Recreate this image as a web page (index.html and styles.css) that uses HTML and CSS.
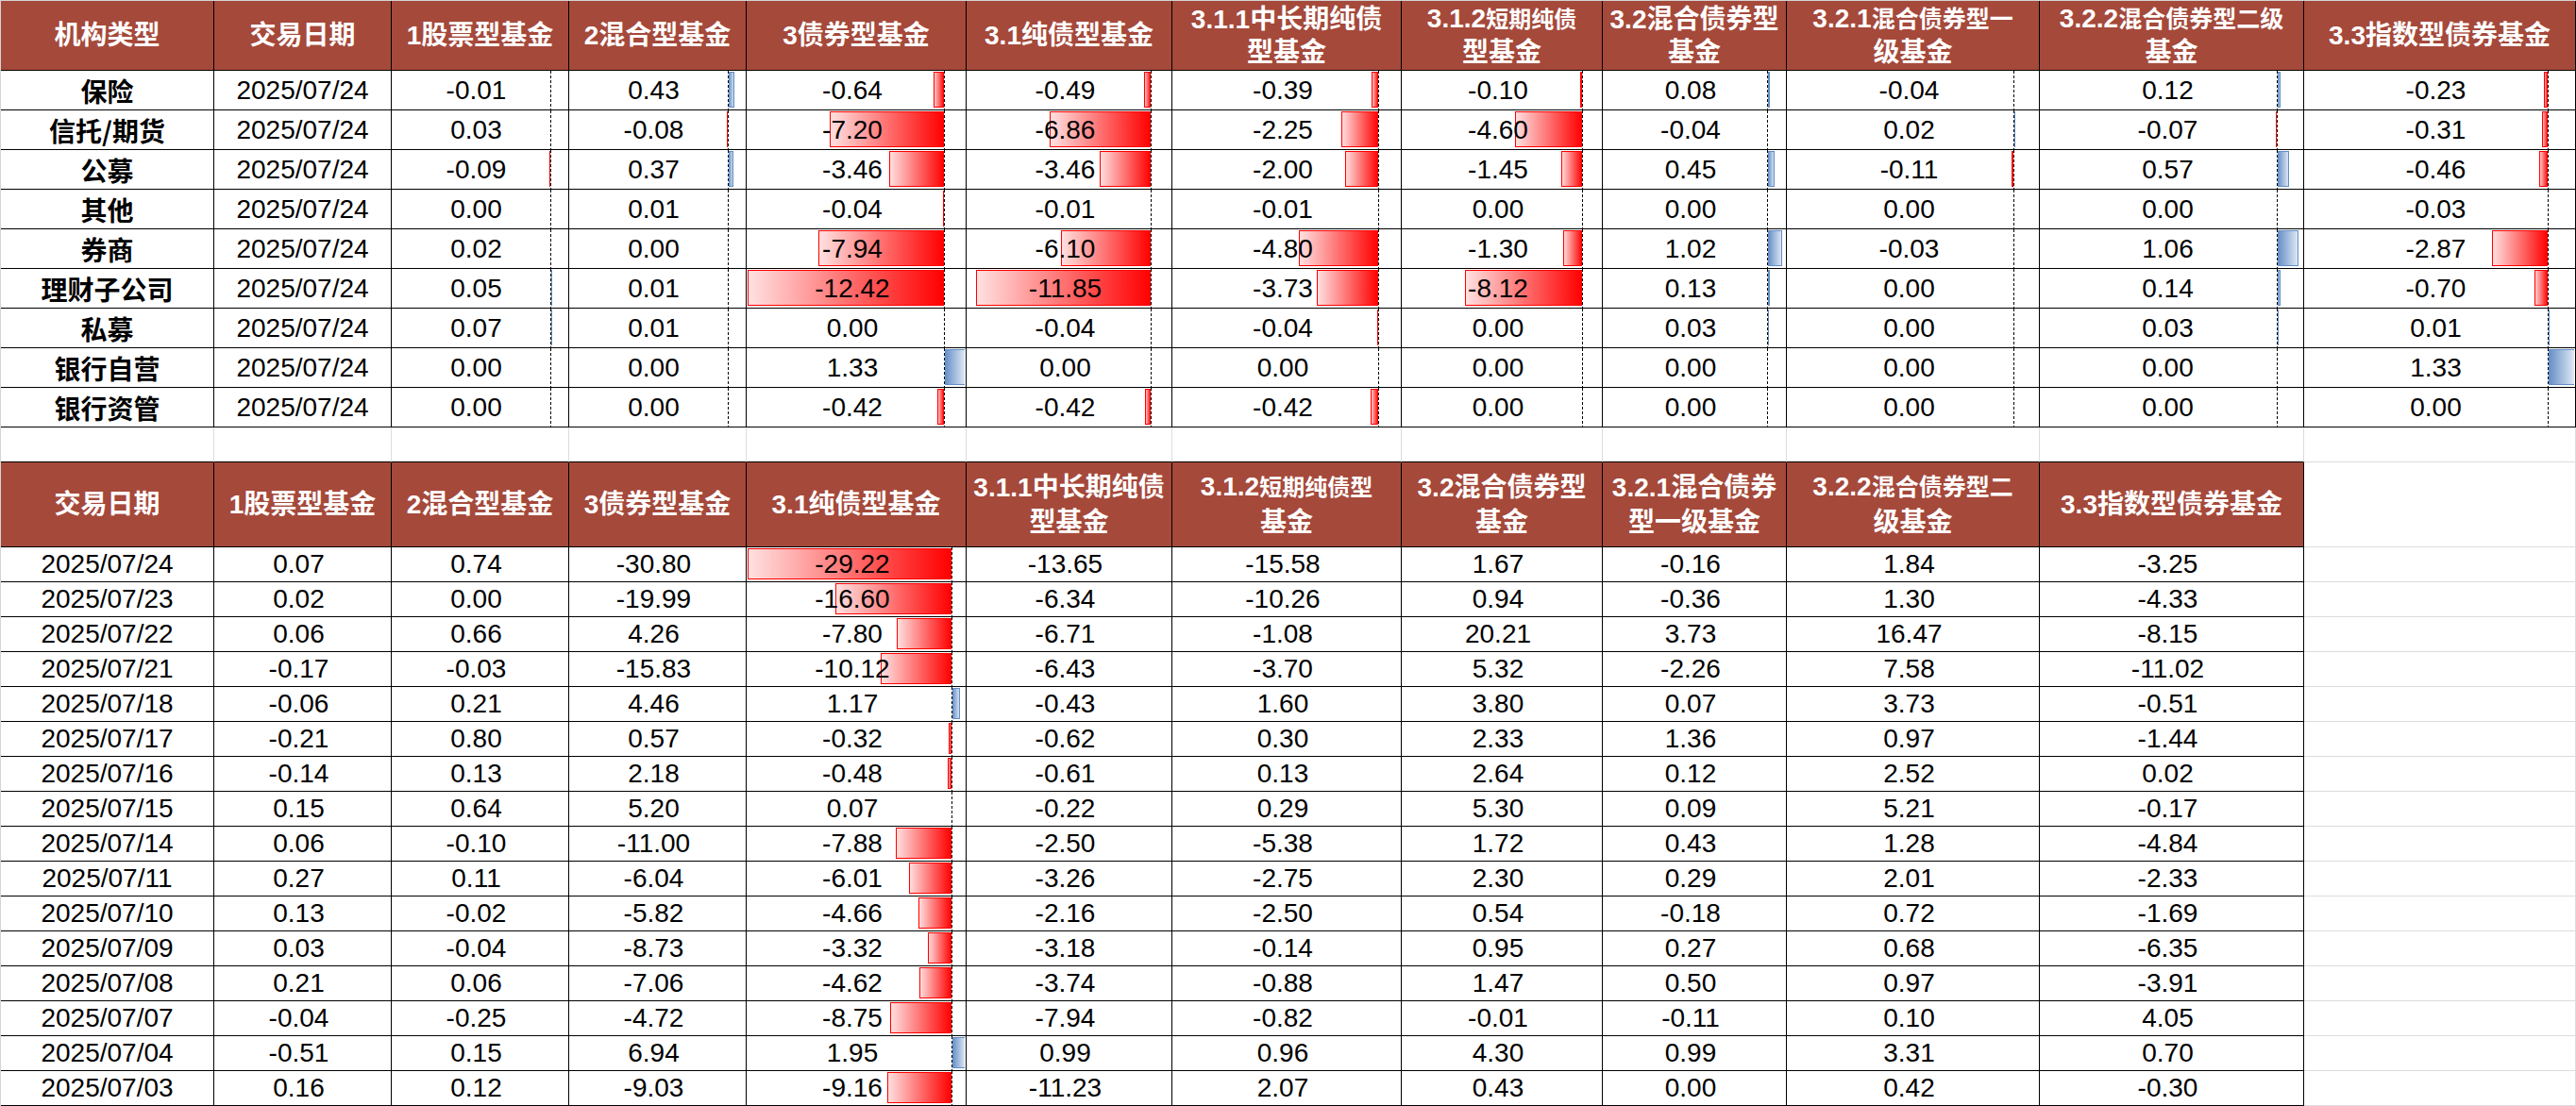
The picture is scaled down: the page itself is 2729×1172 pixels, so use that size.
FILE: index.html
```html
<!DOCTYPE html>
<html lang="zh-CN">
<head>
<meta charset="utf-8">
<title>机构类型净买入</title>
<link rel="stylesheet" href="styles.css">
</head>
<body>
<div class="sheet">
  <div class="grid t1">
    <div class="c h"><span>机构类型</span></div>
    <div class="c h"><span>交易日期</span></div>
    <div class="c h"><span>1股票型基金</span></div>
    <div class="c h"><span>2混合型基金</span></div>
    <div class="c h"><span>3债券型基金</span></div>
    <div class="c h"><span>3.1纯债型基金</span></div>
    <div class="c h"><span>3.1.1中长期纯债<br>型基金</span></div>
    <div class="c h"><span>3.1.2<span class="s24">短期纯债</span><br>型基金</span></div>
    <div class="c h"><span>3.2混合债券型<br>基金</span></div>
    <div class="c h"><span>3.2.1<span class="s25">混合债券型一</span><br>级基金</span></div>
    <div class="c h"><span>3.2.2<span class="s25">混合债券型二级</span><br>基金</span></div>
    <div class="c h"><span>3.3指数型债券基金</span></div>

    <div class="c l">保险</div><div class="c d">2025/07/24</div>
    <div class="c n"><span class="db"><i class="ng" style="--v:0.01"></i></span><span class="v">-0.01</span></div>
    <div class="c n"><span class="db"><i class="ps" style="--v:0.43"></i></span><span class="v">0.43</span></div>
    <div class="c n"><span class="db"><i class="ng" style="--v:0.64"></i></span><span class="v">-0.64</span></div>
    <div class="c n"><span class="db"><i class="ng" style="--v:0.49"></i></span><span class="v">-0.49</span></div>
    <div class="c n"><span class="db"><i class="ng" style="--v:0.39"></i></span><span class="v">-0.39</span></div>
    <div class="c n"><span class="db"><i class="ng" style="--v:0.10"></i></span><span class="v">-0.10</span></div>
    <div class="c n"><span class="db"><i class="ps" style="--v:0.08"></i></span><span class="v">0.08</span></div>
    <div class="c n"><span class="db"><i class="ng" style="--v:0.04"></i></span><span class="v">-0.04</span></div>
    <div class="c n"><span class="db"><i class="ps" style="--v:0.12"></i></span><span class="v">0.12</span></div>
    <div class="c n"><span class="db"><i class="ng" style="--v:0.23"></i></span><span class="v">-0.23</span></div>

    <div class="c l">信托/期货</div><div class="c d">2025/07/24</div>
    <div class="c n"><span class="db"><i class="ps" style="--v:0.03"></i></span><span class="v">0.03</span></div>
    <div class="c n"><span class="db"><i class="ng" style="--v:0.08"></i></span><span class="v">-0.08</span></div>
    <div class="c n"><span class="db"><i class="ng" style="--v:7.20"></i></span><span class="v">-7.20</span></div>
    <div class="c n"><span class="db"><i class="ng" style="--v:6.86"></i></span><span class="v">-6.86</span></div>
    <div class="c n"><span class="db"><i class="ng" style="--v:2.25"></i></span><span class="v">-2.25</span></div>
    <div class="c n"><span class="db"><i class="ng" style="--v:4.60"></i></span><span class="v">-4.60</span></div>
    <div class="c n"><span class="db"><i class="ng" style="--v:0.04"></i></span><span class="v">-0.04</span></div>
    <div class="c n"><span class="db"><i class="ps" style="--v:0.02"></i></span><span class="v">0.02</span></div>
    <div class="c n"><span class="db"><i class="ng" style="--v:0.07"></i></span><span class="v">-0.07</span></div>
    <div class="c n"><span class="db"><i class="ng" style="--v:0.31"></i></span><span class="v">-0.31</span></div>

    <div class="c l">公募</div><div class="c d">2025/07/24</div>
    <div class="c n"><span class="db"><i class="ng" style="--v:0.09"></i></span><span class="v">-0.09</span></div>
    <div class="c n"><span class="db"><i class="ps" style="--v:0.37"></i></span><span class="v">0.37</span></div>
    <div class="c n"><span class="db"><i class="ng" style="--v:3.46"></i></span><span class="v">-3.46</span></div>
    <div class="c n"><span class="db"><i class="ng" style="--v:3.46"></i></span><span class="v">-3.46</span></div>
    <div class="c n"><span class="db"><i class="ng" style="--v:2.00"></i></span><span class="v">-2.00</span></div>
    <div class="c n"><span class="db"><i class="ng" style="--v:1.45"></i></span><span class="v">-1.45</span></div>
    <div class="c n"><span class="db"><i class="ps" style="--v:0.45"></i></span><span class="v">0.45</span></div>
    <div class="c n"><span class="db"><i class="ng" style="--v:0.11"></i></span><span class="v">-0.11</span></div>
    <div class="c n"><span class="db"><i class="ps" style="--v:0.57"></i></span><span class="v">0.57</span></div>
    <div class="c n"><span class="db"><i class="ng" style="--v:0.46"></i></span><span class="v">-0.46</span></div>

    <div class="c l">其他</div><div class="c d">2025/07/24</div>
    <div class="c n"><span class="db"></span><span class="v">0.00</span></div>
    <div class="c n"><span class="db"><i class="ps" style="--v:0.01"></i></span><span class="v">0.01</span></div>
    <div class="c n"><span class="db"><i class="ng" style="--v:0.04"></i></span><span class="v">-0.04</span></div>
    <div class="c n"><span class="db"><i class="ng" style="--v:0.01"></i></span><span class="v">-0.01</span></div>
    <div class="c n"><span class="db"><i class="ng" style="--v:0.01"></i></span><span class="v">-0.01</span></div>
    <div class="c n"><span class="db"></span><span class="v">0.00</span></div>
    <div class="c n"><span class="db"></span><span class="v">0.00</span></div>
    <div class="c n"><span class="db"></span><span class="v">0.00</span></div>
    <div class="c n"><span class="db"></span><span class="v">0.00</span></div>
    <div class="c n"><span class="db"><i class="ng" style="--v:0.03"></i></span><span class="v">-0.03</span></div>

    <div class="c l">券商</div><div class="c d">2025/07/24</div>
    <div class="c n"><span class="db"><i class="ps" style="--v:0.02"></i></span><span class="v">0.02</span></div>
    <div class="c n"><span class="db"></span><span class="v">0.00</span></div>
    <div class="c n"><span class="db"><i class="ng" style="--v:7.94"></i></span><span class="v">-7.94</span></div>
    <div class="c n"><span class="db"><i class="ng" style="--v:6.10"></i></span><span class="v">-6.10</span></div>
    <div class="c n"><span class="db"><i class="ng" style="--v:4.80"></i></span><span class="v">-4.80</span></div>
    <div class="c n"><span class="db"><i class="ng" style="--v:1.30"></i></span><span class="v">-1.30</span></div>
    <div class="c n"><span class="db"><i class="ps" style="--v:1.02"></i></span><span class="v">1.02</span></div>
    <div class="c n"><span class="db"><i class="ng" style="--v:0.03"></i></span><span class="v">-0.03</span></div>
    <div class="c n"><span class="db"><i class="ps" style="--v:1.06"></i></span><span class="v">1.06</span></div>
    <div class="c n"><span class="db"><i class="ng" style="--v:2.87"></i></span><span class="v">-2.87</span></div>

    <div class="c l">理财子公司</div><div class="c d">2025/07/24</div>
    <div class="c n"><span class="db"><i class="ps" style="--v:0.05"></i></span><span class="v">0.05</span></div>
    <div class="c n"><span class="db"><i class="ps" style="--v:0.01"></i></span><span class="v">0.01</span></div>
    <div class="c n"><span class="db"><i class="ng" style="--v:12.42"></i></span><span class="v">-12.42</span></div>
    <div class="c n"><span class="db"><i class="ng" style="--v:11.85"></i></span><span class="v">-11.85</span></div>
    <div class="c n"><span class="db"><i class="ng" style="--v:3.73"></i></span><span class="v">-3.73</span></div>
    <div class="c n"><span class="db"><i class="ng" style="--v:8.12"></i></span><span class="v">-8.12</span></div>
    <div class="c n"><span class="db"><i class="ps" style="--v:0.13"></i></span><span class="v">0.13</span></div>
    <div class="c n"><span class="db"></span><span class="v">0.00</span></div>
    <div class="c n"><span class="db"><i class="ps" style="--v:0.14"></i></span><span class="v">0.14</span></div>
    <div class="c n"><span class="db"><i class="ng" style="--v:0.70"></i></span><span class="v">-0.70</span></div>

    <div class="c l">私募</div><div class="c d">2025/07/24</div>
    <div class="c n"><span class="db"><i class="ps" style="--v:0.07"></i></span><span class="v">0.07</span></div>
    <div class="c n"><span class="db"><i class="ps" style="--v:0.01"></i></span><span class="v">0.01</span></div>
    <div class="c n"><span class="db"></span><span class="v">0.00</span></div>
    <div class="c n"><span class="db"><i class="ng" style="--v:0.04"></i></span><span class="v">-0.04</span></div>
    <div class="c n"><span class="db"><i class="ng" style="--v:0.04"></i></span><span class="v">-0.04</span></div>
    <div class="c n"><span class="db"></span><span class="v">0.00</span></div>
    <div class="c n"><span class="db"><i class="ps" style="--v:0.03"></i></span><span class="v">0.03</span></div>
    <div class="c n"><span class="db"></span><span class="v">0.00</span></div>
    <div class="c n"><span class="db"><i class="ps" style="--v:0.03"></i></span><span class="v">0.03</span></div>
    <div class="c n"><span class="db"><i class="ps" style="--v:0.01"></i></span><span class="v">0.01</span></div>

    <div class="c l">银行自营</div><div class="c d">2025/07/24</div>
    <div class="c n"><span class="db"></span><span class="v">0.00</span></div>
    <div class="c n"><span class="db"></span><span class="v">0.00</span></div>
    <div class="c n"><span class="db"><i class="ps" style="--v:1.33"></i></span><span class="v">1.33</span></div>
    <div class="c n"><span class="db"></span><span class="v">0.00</span></div>
    <div class="c n"><span class="db"></span><span class="v">0.00</span></div>
    <div class="c n"><span class="db"></span><span class="v">0.00</span></div>
    <div class="c n"><span class="db"></span><span class="v">0.00</span></div>
    <div class="c n"><span class="db"></span><span class="v">0.00</span></div>
    <div class="c n"><span class="db"></span><span class="v">0.00</span></div>
    <div class="c n"><span class="db"><i class="ps" style="--v:1.33"></i></span><span class="v">1.33</span></div>

    <div class="c l">银行资管</div><div class="c d">2025/07/24</div>
    <div class="c n"><span class="db"></span><span class="v">0.00</span></div>
    <div class="c n"><span class="db"></span><span class="v">0.00</span></div>
    <div class="c n"><span class="db"><i class="ng" style="--v:0.42"></i></span><span class="v">-0.42</span></div>
    <div class="c n"><span class="db"><i class="ng" style="--v:0.42"></i></span><span class="v">-0.42</span></div>
    <div class="c n"><span class="db"><i class="ng" style="--v:0.42"></i></span><span class="v">-0.42</span></div>
    <div class="c n"><span class="db"></span><span class="v">0.00</span></div>
    <div class="c n"><span class="db"></span><span class="v">0.00</span></div>
    <div class="c n"><span class="db"></span><span class="v">0.00</span></div>
    <div class="c n"><span class="db"></span><span class="v">0.00</span></div>
    <div class="c n"><span class="db"></span><span class="v">0.00</span></div>
  </div>

  <div class="grid gap">
    <div class="g"></div><div class="g"></div><div class="g"></div><div class="g"></div>
    <div class="g"></div><div class="g"></div><div class="g"></div><div class="g"></div>
    <div class="g"></div><div class="g"></div><div class="g"></div><div class="g e"></div>
  </div>

  <div class="grid t2">
    <div class="c h"><span>交易日期</span></div>
    <div class="c h"><span>1股票型基金</span></div>
    <div class="c h"><span>2混合型基金</span></div>
    <div class="c h"><span>3债券型基金</span></div>
    <div class="c h"><span>3.1纯债型基金</span></div>
    <div class="c h"><span>3.1.1中长期纯债<br>型基金</span></div>
    <div class="c h"><span>3.1.2<span class="s24">短期纯债型</span><br>基金</span></div>
    <div class="c h"><span>3.2混合债券型<br>基金</span></div>
    <div class="c h"><span>3.2.1混合债券<br>型一级基金</span></div>
    <div class="c h"><span>3.2.2<span class="s25">混合债券型二</span><br>级基金</span></div>
    <div class="c h"><span>3.3指数型债券基金</span></div>
    <div class="x"></div>

    <div class="c d">2025/07/24</div><div class="c n">0.07</div><div class="c n">0.74</div><div class="c n">-30.80</div>
    <div class="c n"><span class="db"><i class="ng" style="--v:29.22"></i></span><span class="v">-29.22</span></div>
    <div class="c n">-13.65</div><div class="c n">-15.58</div><div class="c n">1.67</div><div class="c n">-0.16</div><div class="c n">1.84</div><div class="c n">-3.25</div><div class="x"></div>

    <div class="c d">2025/07/23</div><div class="c n">0.02</div><div class="c n">0.00</div><div class="c n">-19.99</div>
    <div class="c n"><span class="db"><i class="ng" style="--v:16.60"></i></span><span class="v">-16.60</span></div>
    <div class="c n">-6.34</div><div class="c n">-10.26</div><div class="c n">0.94</div><div class="c n">-0.36</div><div class="c n">1.30</div><div class="c n">-4.33</div><div class="x"></div>

    <div class="c d">2025/07/22</div><div class="c n">0.06</div><div class="c n">0.66</div><div class="c n">4.26</div>
    <div class="c n"><span class="db"><i class="ng" style="--v:7.80"></i></span><span class="v">-7.80</span></div>
    <div class="c n">-6.71</div><div class="c n">-1.08</div><div class="c n">20.21</div><div class="c n">3.73</div><div class="c n">16.47</div><div class="c n">-8.15</div><div class="x"></div>

    <div class="c d">2025/07/21</div><div class="c n">-0.17</div><div class="c n">-0.03</div><div class="c n">-15.83</div>
    <div class="c n"><span class="db"><i class="ng" style="--v:10.12"></i></span><span class="v">-10.12</span></div>
    <div class="c n">-6.43</div><div class="c n">-3.70</div><div class="c n">5.32</div><div class="c n">-2.26</div><div class="c n">7.58</div><div class="c n">-11.02</div><div class="x"></div>

    <div class="c d">2025/07/18</div><div class="c n">-0.06</div><div class="c n">0.21</div><div class="c n">4.46</div>
    <div class="c n"><span class="db"><i class="ps" style="--v:1.17"></i></span><span class="v">1.17</span></div>
    <div class="c n">-0.43</div><div class="c n">1.60</div><div class="c n">3.80</div><div class="c n">0.07</div><div class="c n">3.73</div><div class="c n">-0.51</div><div class="x"></div>

    <div class="c d">2025/07/17</div><div class="c n">-0.21</div><div class="c n">0.80</div><div class="c n">0.57</div>
    <div class="c n"><span class="db"><i class="ng" style="--v:0.32"></i></span><span class="v">-0.32</span></div>
    <div class="c n">-0.62</div><div class="c n">0.30</div><div class="c n">2.33</div><div class="c n">1.36</div><div class="c n">0.97</div><div class="c n">-1.44</div><div class="x"></div>

    <div class="c d">2025/07/16</div><div class="c n">-0.14</div><div class="c n">0.13</div><div class="c n">2.18</div>
    <div class="c n"><span class="db"><i class="ng" style="--v:0.48"></i></span><span class="v">-0.48</span></div>
    <div class="c n">-0.61</div><div class="c n">0.13</div><div class="c n">2.64</div><div class="c n">0.12</div><div class="c n">2.52</div><div class="c n">0.02</div><div class="x"></div>

    <div class="c d">2025/07/15</div><div class="c n">0.15</div><div class="c n">0.64</div><div class="c n">5.20</div>
    <div class="c n"><span class="db"><i class="ps" style="--v:0.07"></i></span><span class="v">0.07</span></div>
    <div class="c n">-0.22</div><div class="c n">0.29</div><div class="c n">5.30</div><div class="c n">0.09</div><div class="c n">5.21</div><div class="c n">-0.17</div><div class="x"></div>

    <div class="c d">2025/07/14</div><div class="c n">0.06</div><div class="c n">-0.10</div><div class="c n">-11.00</div>
    <div class="c n"><span class="db"><i class="ng" style="--v:7.88"></i></span><span class="v">-7.88</span></div>
    <div class="c n">-2.50</div><div class="c n">-5.38</div><div class="c n">1.72</div><div class="c n">0.43</div><div class="c n">1.28</div><div class="c n">-4.84</div><div class="x"></div>

    <div class="c d">2025/07/11</div><div class="c n">0.27</div><div class="c n">0.11</div><div class="c n">-6.04</div>
    <div class="c n"><span class="db"><i class="ng" style="--v:6.01"></i></span><span class="v">-6.01</span></div>
    <div class="c n">-3.26</div><div class="c n">-2.75</div><div class="c n">2.30</div><div class="c n">0.29</div><div class="c n">2.01</div><div class="c n">-2.33</div><div class="x"></div>

    <div class="c d">2025/07/10</div><div class="c n">0.13</div><div class="c n">-0.02</div><div class="c n">-5.82</div>
    <div class="c n"><span class="db"><i class="ng" style="--v:4.66"></i></span><span class="v">-4.66</span></div>
    <div class="c n">-2.16</div><div class="c n">-2.50</div><div class="c n">0.54</div><div class="c n">-0.18</div><div class="c n">0.72</div><div class="c n">-1.69</div><div class="x"></div>

    <div class="c d">2025/07/09</div><div class="c n">0.03</div><div class="c n">-0.04</div><div class="c n">-8.73</div>
    <div class="c n"><span class="db"><i class="ng" style="--v:3.32"></i></span><span class="v">-3.32</span></div>
    <div class="c n">-3.18</div><div class="c n">-0.14</div><div class="c n">0.95</div><div class="c n">0.27</div><div class="c n">0.68</div><div class="c n">-6.35</div><div class="x"></div>

    <div class="c d">2025/07/08</div><div class="c n">0.21</div><div class="c n">0.06</div><div class="c n">-7.06</div>
    <div class="c n"><span class="db"><i class="ng" style="--v:4.62"></i></span><span class="v">-4.62</span></div>
    <div class="c n">-3.74</div><div class="c n">-0.88</div><div class="c n">1.47</div><div class="c n">0.50</div><div class="c n">0.97</div><div class="c n">-3.91</div><div class="x"></div>

    <div class="c d">2025/07/07</div><div class="c n">-0.04</div><div class="c n">-0.25</div><div class="c n">-4.72</div>
    <div class="c n"><span class="db"><i class="ng" style="--v:8.75"></i></span><span class="v">-8.75</span></div>
    <div class="c n">-7.94</div><div class="c n">-0.82</div><div class="c n">-0.01</div><div class="c n">-0.11</div><div class="c n">0.10</div><div class="c n">4.05</div><div class="x"></div>

    <div class="c d">2025/07/04</div><div class="c n">-0.51</div><div class="c n">0.15</div><div class="c n">6.94</div>
    <div class="c n"><span class="db"><i class="ps" style="--v:1.95"></i></span><span class="v">1.95</span></div>
    <div class="c n">0.99</div><div class="c n">0.96</div><div class="c n">4.30</div><div class="c n">0.99</div><div class="c n">3.31</div><div class="c n">0.70</div><div class="x"></div>

    <div class="c d">2025/07/03</div><div class="c n">0.16</div><div class="c n">0.12</div><div class="c n">-9.03</div>
    <div class="c n"><span class="db"><i class="ng" style="--v:9.16"></i></span><span class="v">-9.16</span></div>
    <div class="c n">-11.23</div><div class="c n">2.07</div><div class="c n">0.43</div><div class="c n">0.00</div><div class="c n">0.42</div><div class="c n">-0.30</div><div class="x"></div>
  </div>
</div>
</body>
</html>
```

FILE: styles.css
```css
* {
  box-sizing: border-box;
}

html,
body {
  margin: 0;
  padding: 0;
  background: #ffffff;
}

body {
  width: 2729px;
  height: 1172px;
  overflow: hidden;
  font-family: "Liberation Sans", "Noto Sans CJK SC", Arial, sans-serif;
  font-size: 28px;
  color: #000000;
}

.sheet {
  width: 2729px;
  border-left: 1px solid #d4d4d4;
  border-top: 1px solid #d4d4d4;
}

.grid {
  display: grid;
  grid-template-columns: 226px 188px 188px 188px 233px 218px 243px 213px 195px 268px 280px 288px;
}

.t1 {
  grid-template-rows: 74px repeat(9, 42px);
  --ax: 90.327%;
  --u: 7.2727%;
}

.gap {
  grid-template-rows: 37px;
}

.t2 {
  grid-template-rows: 90px repeat(16, 37px);
  --ax: 93.744%;
  --u: 3.2082%;
}

.c {
  position: relative;
  display: flex;
  align-items: center;
  justify-content: center;
  white-space: nowrap;
  border-right: 1px solid #000000;
  border-bottom: 1px solid #000000;
}

.h {
  background: #a5493b;
  color: #ffffff;
  font-weight: bold;
  text-align: center;
  line-height: 35px;
}

.t2 .h {
  line-height: 37px;
}

.s24 {
  font-size: 24px;
}

.s25 {
  font-size: 25px;
}

.l {
  font-family: "Noto Sans CJK SC", sans-serif;
  font-weight: bold;
}

.n {
  padding-right: 8px;
}

.v {
  position: relative;
}

.g {
  border-right: 1px solid #dcdcdc;
  border-bottom: 1px solid #000000;
}

.g.e {
  border-bottom-color: #dcdcdc;
}

.x {
  border-right: 1px solid #dcdcdc;
  border-bottom: 1px solid #dcdcdc;
}

/* data bars */
.db {
  position: absolute;
  top: 0;
  bottom: 0;
  left: 1px;
  right: 1px;
  overflow: hidden;
}

.db::before {
  content: "";
  position: absolute;
  top: 0;
  bottom: 0;
  left: var(--ax);
  width: 1px;
  background: repeating-linear-gradient(to bottom, #000000 0, #000000 3px, transparent 3px, transparent 5px);
}

.ng,
.ps {
  position: absolute;
  top: 1px;
  bottom: 2px;
  width: calc(var(--v) * var(--u));
}

.ng {
  right: calc(100% - var(--ax));
  background: linear-gradient(to left, #ff0000, #ffe2e2);
  box-shadow: inset 0 0 0 1px #ff0000;
}

.ps {
  left: calc(var(--ax) + 1px);
  background: linear-gradient(to right, #638ec6, #e4ebf6);
  box-shadow: inset 0 0 0 1px #638ec6;
}
```
